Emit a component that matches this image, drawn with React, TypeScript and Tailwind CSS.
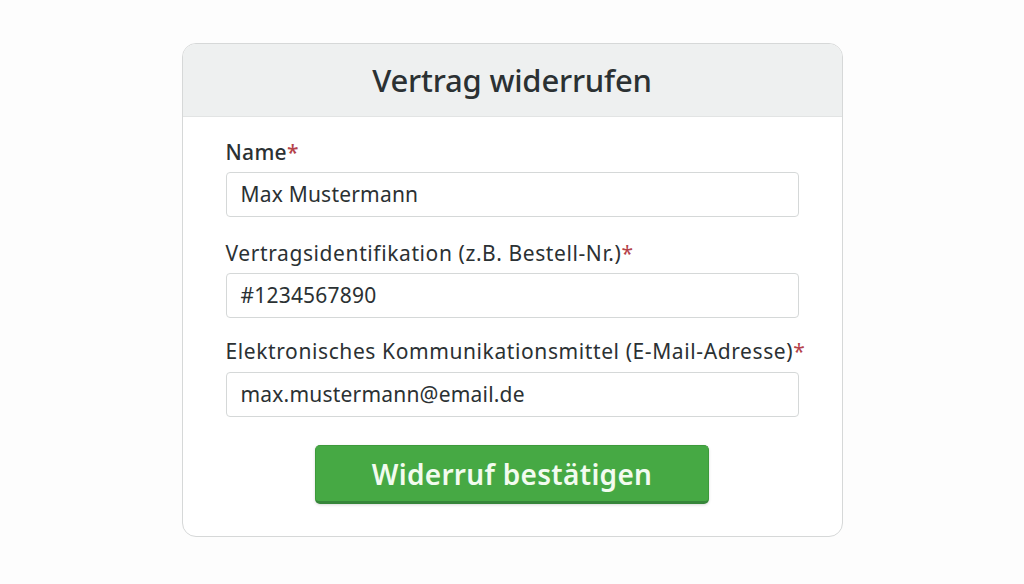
export default function App() {
  return (
    <div
      className="min-h-screen w-full bg-[#fdfdfd] flex justify-center pt-[43px]"
      style={{ fontFamily: '"Noto Sans", "Open Sans", sans-serif' }}
    >
      <div className="w-[661px] h-[494px] bg-white border border-[#d6d8d8] rounded-[14px] overflow-hidden flex flex-col">
        <div className="h-[73px] bg-[#eef0f0] border-b border-[#e2e4e4] flex items-center justify-center">
          <h1 className="text-[31px] font-medium text-[#2b3133] tracking-[-0.2px]">
            Vertrag widerrufen
          </h1>
        </div>

        <div className="px-[43px] pt-[22px] flex flex-col">
          <label className="text-[21px] font-medium text-[#2b3133] leading-[26px] tracking-[0.3px]">
            Name<span className="text-[#b5424a]">*</span>
          </label>
          <div className="mt-[7px] h-[45px] w-[573px] border border-[#d5d8d8] rounded-[4px] flex items-center px-[14px] text-[21px] text-[#2b3133] tracking-[0.2px]">
            Max Mustermann
          </div>

          <label className="mt-[23px] text-[21px] text-[#2b3133] leading-[26px] tracking-[0.6px]">
            Vertragsidentifikation (z.B. Bestell-Nr.)
            <span className="text-[#b5424a]">*</span>
          </label>
          <div className="mt-[7px] h-[45px] w-[573px] border border-[#d5d8d8] rounded-[4px] flex items-center px-[14px] text-[21px] text-[#2b3133] tracking-[0.2px]">
            #1234567890
          </div>

          <label className="mt-[20px] text-[21px] text-[#2b3133] leading-[26px] whitespace-nowrap tracking-[0.6px]">
            Elektronisches Kommunikationsmittel (E-Mail-Adresse)
            <span className="text-[#b5424a]">*</span>
          </label>
          <div className="mt-[8px] h-[45px] w-[573px] border border-[#d5d8d8] rounded-[4px] flex items-center px-[14px] text-[21px] text-[#2b3133] tracking-[0.2px]">
            max.mustermann@email.de
          </div>

          <div className="mt-[28px] flex justify-center">
            <button className="w-[394px] h-[59px] bg-[#46a944] border border-[#3d9a3b] border-b-[3px] border-b-[#36863a] rounded-[5px] text-[28px] font-semibold text-[#f2fbef] shadow-[0_1px_3px_rgba(0,0,0,0.15)] tracking-[0.3px]">
              Widerruf bestätigen
            </button>
          </div>
        </div>
      </div>
    </div>
  );
}
